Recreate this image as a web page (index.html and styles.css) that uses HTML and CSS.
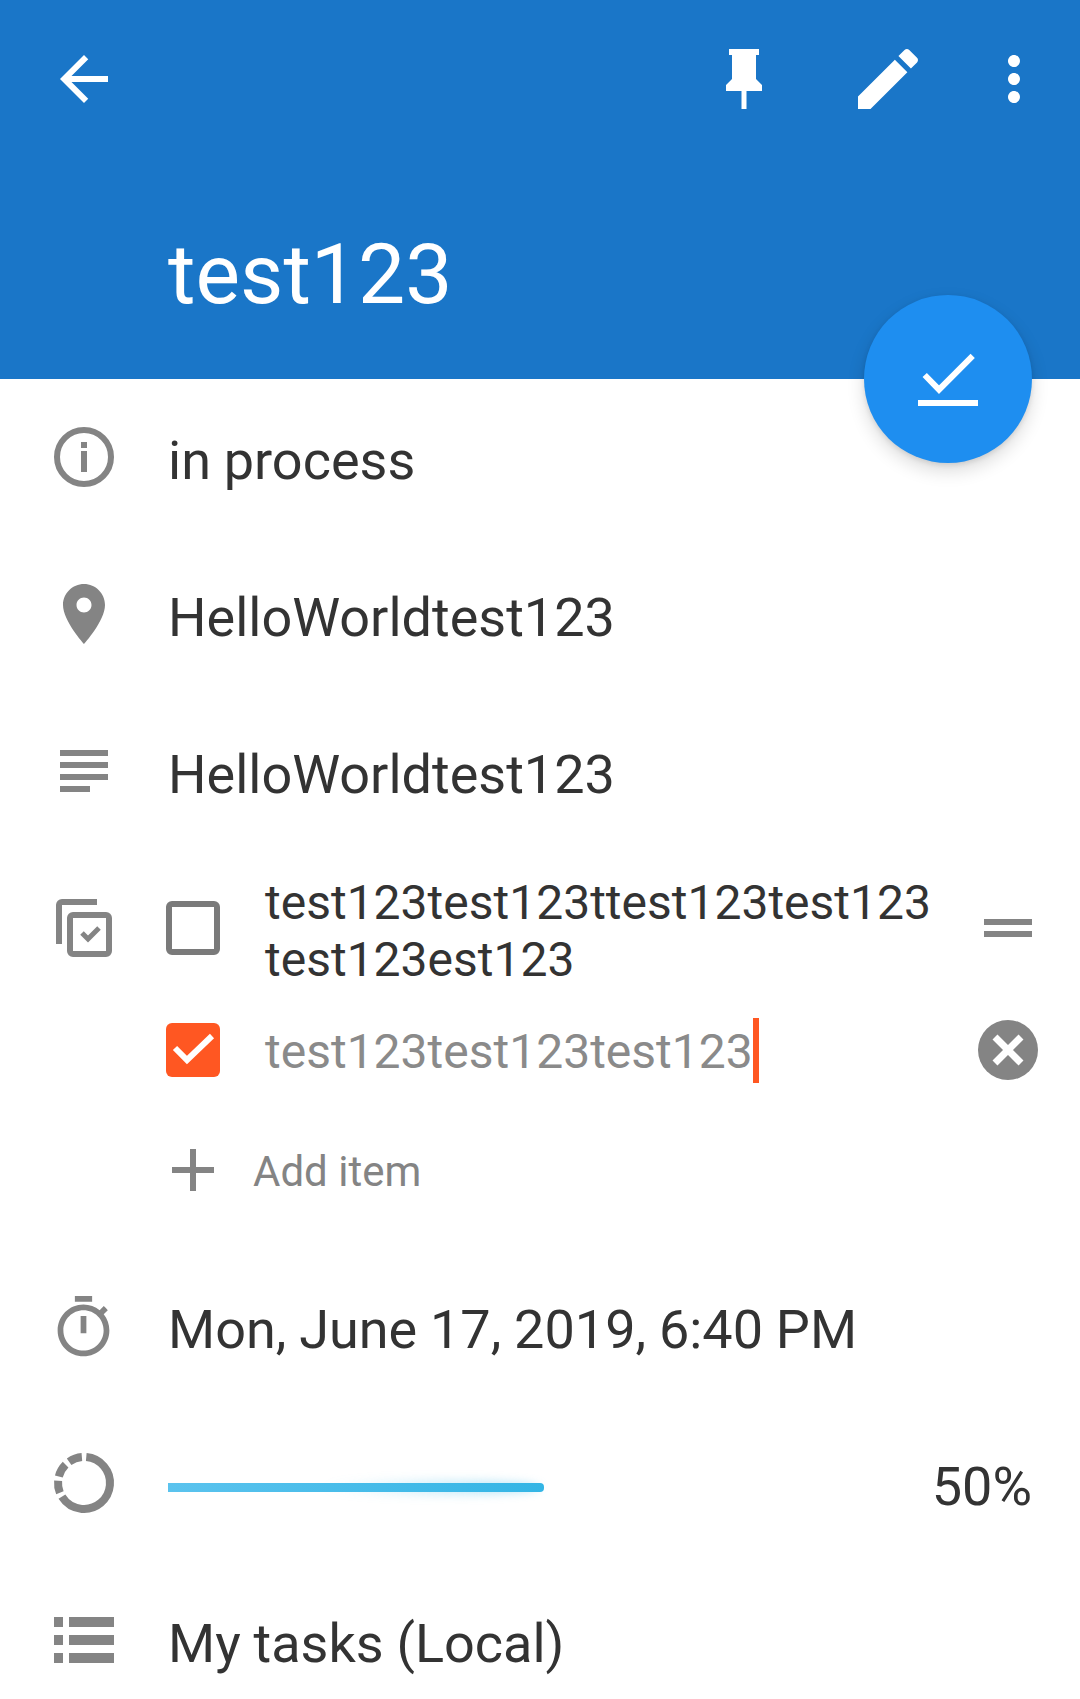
FILE: index.html
```html
<!DOCTYPE html>
<html lang="en">
<head>
<meta charset="utf-8">
<title>test123</title>
<link rel="stylesheet" href="styles.css">
</head>
<body>
<div class="page">
  <header class="appbar">
    <div class="toolbar">
      <svg class="tool back" viewBox="0 0 24 24"><path d="M20 11H7.830l5.590-5.590L12 4l-8 8 8 8 1.410-1.410L7.830 13H20v-2z"/></svg>
      <svg class="tool pin" viewBox="0 0 72 72"><path d="M21 6h30v6h-3v24l6 6v6H38.500v18h-5V48H18v-6l6-6V12h-3z"/></svg>
      <svg class="tool edit" viewBox="0 0 24 24"><path d="M3 17.250V21h3.750L17.810 9.940l-3.750-3.750L3 17.250zM20.710 7.040c.39-.39.39-1.020 0-1.410l-2.340-2.340c-.39-.39-1.020-.39-1.410 0l-1.830 1.830 3.750 3.750 1.830-1.830z"/></svg>
      <svg class="tool more" viewBox="0 0 24 24"><path d="M12 8c1.100 0 2-.9 2-2s-.9-2-2-2-2 .9-2 2 .9 2 2 2zm0 2c-1.100 0-2 .9-2 2s.9 2 2 2 2-.9 2-2-.9-2-2-2zm0 6c-1.100 0-2 .9-2 2s.9 2 2 2 2-.9 2-2-.9-2-2-2z"/></svg>
    </div>
    <h1 class="title">test123</h1>
    <button class="fab" type="button">
      <svg class="fab-icon" viewBox="0 0 72 72"><path d="M6 57h60v6H6z"/><path class="fab-check" d="M12.700 32L27 46.700 60.700 12.800"/></svg>
    </button>
  </header>
  <main class="details">
    <section class="row">
      <div class="gutter"><svg class="ico" viewBox="0 0 72 72"><circle class="ring" cx="36" cy="36" r="27"/><path d="M33 21h6v6h-6zM33 30h6v21h-6z"/></svg></div>
      <div class="value">in process</div>
    </section>
    <section class="row">
      <div class="gutter"><svg class="ico" viewBox="0 0 24 24"><path d="M12 2C8.130 2 5 5.130 5 9c0 5.250 7 13 7 13s7-7.750 7-13c0-3.870-3.130-7-7-7zm0 9.500c-1.380 0-2.500-1.120-2.500-2.500s1.120-2.500 2.500-2.500 2.500 1.120 2.500 2.500-1.120 2.500-2.500 2.500z"/></svg></div>
      <div class="value">HelloWorldtest123</div>
    </section>
    <section class="row">
      <div class="gutter"><svg class="ico" viewBox="0 0 24 24"><path d="M4 5h16v2H4zM4 9h16v2H4zM4 13h16v2H4zM4 17h10v2H4z"/></svg></div>
      <div class="value">HelloWorldtest123</div>
    </section>
    <section class="checklist">
      <div class="gutter gutter-top"><svg class="ico ico-flush" viewBox="0 0 72 72"><path class="boxline" d="M49 10H14a3 3 0 0 0-3 3v39"/><rect class="boxline" x="22" y="23" width="39" height="39" rx="3"/><path class="boxline boxline-check" d="M34 41l6 6 11-11"/></svg></div>
      <div class="items">
        <div class="item">
          <span class="box"></span>
          <div class="item-text item-text-dark">test123test123ttest123test123<br>test123est123</div>
          <svg class="handle" viewBox="0 0 48 18"><path d="M0 0h48v6H0zM0 12h48v6H0z"/></svg>
        </div>
        <div class="item item-done">
          <span class="box box-on"><svg class="box-check" viewBox="0 0 54 54"><path d="M9 25l12 12 25-24"/></svg></span>
          <div class="item-text text-muted"><span class="caret">test123test123test123</span></div>
          <svg class="clear" viewBox="0 0 60 60"><circle cx="30" cy="30" r="30"/><path class="x" d="M17 17l26 26M43 17L17 43"/></svg>
        </div>
        <div class="add">
          <svg class="plus" viewBox="0 0 42 42"><path d="M18 0h6v18h18v6H24v18h-6V24H0v-6h18z"/></svg>
          <span class="add-label">Add item</span>
        </div>
      </div>
    </section>
    <section class="row">
      <div class="gutter"><svg class="ico timer" viewBox="0 0 24 24"><path d="M15 1H9v2h6V1zm-4 13h2V8h-2v6zm8.030-6.610l1.420-1.420c-.43-.51-.9-.99-1.410-1.410l-1.420 1.420C16.070 4.740 14.120 4 12 4c-4.970 0-9 4.030-9 9s4.020 9 9 9 9-4.030 9-9c0-2.120-.74-4.070-1.970-5.610zM12 20c-3.870 0-7-3.130-7-7s3.130-7 7-7 7 3.130 7 7-3.130 7-7 7z"/></svg></div>
      <div class="value">Mon, June 17, 2019, 6:40 PM</div>
    </section>
    <section class="row">
      <div class="gutter"><svg class="ico" viewBox="0 0 72 72"><circle class="dash" cx="36" cy="36" r="26" pathLength="360" transform="rotate(-85 36 36)"/></svg></div>
      <div class="progress"><div class="bar" style="width:376px"></div></div>
      <div class="percent">50%</div>
    </section>
    <section class="row">
      <div class="gutter"><svg class="ico" viewBox="0 0 72 72"><path d="M6 13h9v10H6zM21 13h45v10H21zM6 31h9v10H6zM21 31h45v10H21zM6 49h9v10H6zM21 49h45v10H21z"/></svg></div>
      <div class="value">My tasks (Local)</div>
    </section>
  </main>
</div>
</body>
</html>
```
FILE: styles.css
```css
* { box-sizing: border-box; }
html, body { margin: 0; padding: 0; }
body { background: #fff; font-family: Roboto, "Noto Sans", sans-serif; color: #333; }
.page { width: 1080px; height: 1699px; overflow: hidden; }

.appbar { position: relative; height: 379px; background: #1a76c8; color: #fff; }
.toolbar { display: flex; align-items: center; height: 72px; padding: 43px 30px 0 48px; box-sizing: content-box; }
.tool { width: 72px; height: 72px; fill: #fff; flex: none; }
.back { margin-right: auto; }
.edit { width: 80px; height: 80px; margin-left: 68px; }
.more { margin-left: 50px; }
.title { position: absolute; top: 0; left: 0; margin: 0; padding: 226px 0 0 168px; font-size: 84px; line-height: 98px; font-weight: 400; }

.fab { position: absolute; left: 864px; top: 295px; width: 168px; height: 168px; border: 0; padding: 0; border-radius: 50%; background: #1e8ef0; box-shadow: 0 8px 18px rgba(0,0,0,.14), 0 2px 5px rgba(0,0,0,.1); display: flex; align-items: center; justify-content: center; }
.fab-icon { width: 72px; height: 72px; fill: #fff; }
.fab-check { fill: none; stroke: #fff; stroke-width: 6; }

.details { padding-top: 1px; }
.row { display: flex; align-items: center; height: 157px; }
.gutter { width: 168px; flex: none; display: flex; justify-content: center; }
.gutter-top { padding-top: 41px; align-self: flex-start; }
.ico { width: 72px; height: 72px; fill: #848484; display: block; margin-top: -3px; }
.ico-flush { margin-top: 0; }
.timer { width: 69px; height: 69px; margin: 0 0 0 -2px; }
.ring { fill: none; stroke: #848484; stroke-width: 6; }
.boxline { fill: none; stroke: #848484; stroke-width: 6; }
.boxline-check { stroke-width: 5; }
.dash { fill: none; stroke: #848484; stroke-width: 8; stroke-dasharray: 233 10 27 10 30 10 30 10; }
.value { font-size: 54px; line-height: 64px; white-space: nowrap; padding-top: 4px; word-spacing: -.6px; }

.checklist { display: flex; height: 398px; }
.items { flex: 1; display: flex; flex-direction: column; padding-top: 20px; }
.item { display: flex; align-items: center; height: 114px; }
.item-done { margin-top: 8px; }
.box { width: 54px; height: 54px; flex: none; border: 6px solid #7a7a7a; border-radius: 6px; margin-left: -2px; margin-right: 45px; }
.box-on { border: 0; background: #ff5722; }
.box-check { display: block; width: 54px; height: 54px; fill: none; stroke: #fff; stroke-width: 6; }
.item-text { flex: 1; font-size: 48px; line-height: 57px; white-space: nowrap; }
.item-text-dark { padding-top: 3px; margin-bottom: -3px; }
.text-muted { color: #8a8a8a; }
.caret { display: inline-block; border-right: 6px solid #ff5722; height: 65px; line-height: 68px; }
.handle { width: 48px; height: 18px; fill: #848484; flex: none; margin-right: 48px; }
.clear { width: 60px; height: 60px; flex: none; margin-right: 42px; fill: #848484; }
.x { fill: none; stroke: #fff; stroke-width: 7; }
.add { display: flex; align-items: center; margin-top: 6px; height: 114px; }
.plus { width: 42px; height: 42px; fill: #848484; margin-left: 4px; flex: none; }
.add-label { font-size: 42px; color: #848484; margin-left: 39px; padding-top: 3px; }

.progress { width: 376px; flex: none; padding-top: 6px; }
.bar { position: relative; height: 9px; border-radius: 0 4px 4px 0; background: linear-gradient(90deg, #5bc3ee, #33b5e5); }
.bar::after { content: ""; position: absolute; z-index: -1; right: 4px; top: -3px; width: 220px; height: 15px; border-radius: 50%; background: linear-gradient(90deg, rgba(51,181,229,0), rgba(51,181,229,.4)); filter: blur(5px); }
.percent { margin-left: auto; padding: 4px 48px 0 0; font-size: 54px; line-height: 64px; }
```
